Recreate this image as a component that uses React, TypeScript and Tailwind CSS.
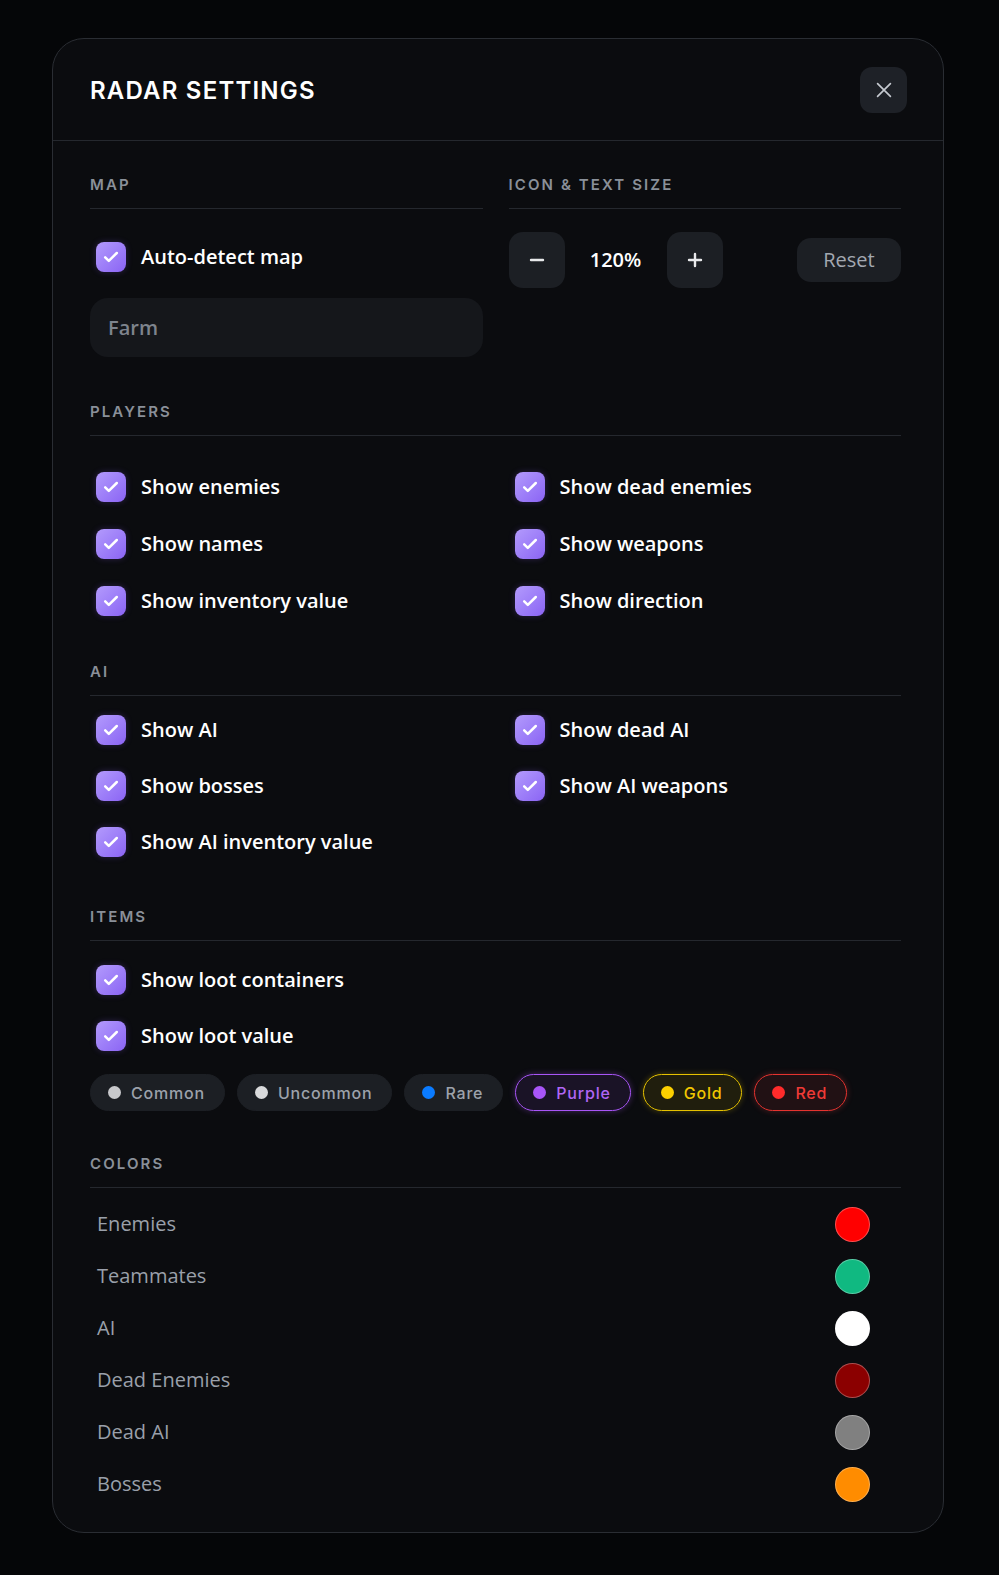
import React from "react";

const body = { fontFamily: '"Open Sans", "Noto Sans", sans-serif' };
const display = { fontFamily: 'Inter, "Noto Sans", sans-serif' };

function Check() {
  return (
    <span className="flex h-[30px] w-[30px] shrink-0 items-center justify-center rounded-[8px] bg-gradient-to-br from-[#b39afc] to-[#8b63f4] shadow-[0_0_6px_rgba(139,92,246,0.25)]">
      <svg width="18" height="18" viewBox="0 0 18 18" fill="none">
        <path d="M3.2 9.4l3.6 3.5L14.8 5" stroke="#fff" strokeWidth="2.5" strokeLinecap="round" strokeLinejoin="round" />
      </svg>
    </span>
  );
}

function CheckRow({ label, h = "h-[57px]" }: { label: string; h?: string }) {
  return (
    <div className={`flex ${h} items-center gap-[15px] pl-[6px]`}>
      <Check />
      <span className="text-[20px] font-semibold text-white" style={body}>
        {label}
      </span>
    </div>
  );
}

function SectionLabel({ children }: { children: React.ReactNode }) {
  return (
    <div
      className="border-b border-[#25282e] pb-[13px] text-[15px] leading-[20px] font-semibold tracking-[0.14em] text-[#8a9099]"
      style={display}
    >
      {children}
    </div>
  );
}

type Chip = { name: string; dot: string; cls: string };

const chips: Chip[] = [
  { name: "Common", dot: "bg-[#c8c9cc]", cls: "bg-[#1c1f24] border-[#1c1f24] text-[#9ca2ab]" },
  { name: "Uncommon", dot: "bg-[#d9dadc]", cls: "bg-[#1c1f24] border-[#1c1f24] text-[#9ca2ab]" },
  { name: "Rare", dot: "bg-[#0a7bff]", cls: "bg-[#1c1f24] border-[#1c1f24] text-[#9ca2ab]" },
  { name: "Purple", dot: "bg-[#a855f7]", cls: "bg-[#a855f7]/10 border-[#a855f7] text-[#b066f5] shadow-[0_0_6px_rgba(168,85,247,0.35)]" },
  { name: "Gold", dot: "bg-[#fcd000]", cls: "bg-[#e6c200]/10 border-[#e6c200] text-[#f2c700] shadow-[0_0_6px_rgba(230,194,0,0.3)]" },
  { name: "Red", dot: "bg-[#ff2b2b]", cls: "bg-[#ef4444]/10 border-[#e5332f] text-[#f03a36] shadow-[0_0_6px_rgba(239,68,68,0.3)]" },
];

const swatches = [
  { name: "Enemies", color: "bg-[#ff0000]" },
  { name: "Teammates", color: "bg-[#10b981]" },
  { name: "AI", color: "bg-[#ffffff]" },
  { name: "Dead Enemies", color: "bg-[#8b0000]" },
  { name: "Dead AI", color: "bg-[#808080]" },
  { name: "Bosses", color: "bg-[#ff8c00]" },
];

export default function App() {
  return (
    <div className="min-h-screen bg-[#050608] pt-[38px] pb-[43px]">
      <div className="ml-[52px] w-[892px] rounded-[32px] border border-[#2a2d33] bg-[#0b0c0f]">
        {/* header */}
        <div className="flex h-[102px] items-center justify-between border-b border-[#25282e] pl-[37px] pr-[36px]">
          <h1 className="pt-[3px] text-[24px] font-semibold tracking-[0.05em] text-white" style={display}>
            RADAR SETTINGS
          </h1>
          <button className="flex h-[46px] w-[47px] items-center justify-center rounded-[12px] bg-[#1e2127]">
            <svg width="22" height="22" viewBox="0 0 24 24" fill="none">
              <path d="M5 5l14 14M19 5L5 19" stroke="#c6cad1" strokeWidth="1.8" strokeLinecap="round" />
            </svg>
          </button>
        </div>

        <div className="pl-[37px] pr-[42px] pt-[34px] pb-[22px]">
          {/* map + size */}
          <div className="grid grid-cols-2 gap-x-[26px]">
            <div>
              <SectionLabel>MAP</SectionLabel>
              <div className="mt-[26px]">
                <CheckRow label="Auto-detect map" h="h-[44px]" />
              </div>
              <div
                className="mt-[19px] flex h-[59px] items-center rounded-[18px] bg-[#15171b] pl-[18px] text-[20px] font-semibold text-[#7e848d]"
                style={body}
              >
                Farm
              </div>
            </div>
            <div>
              <SectionLabel>ICON &amp; TEXT SIZE</SectionLabel>
              <div className="mt-[23px] flex items-center justify-between">
                <div className="flex items-center">
                  <button className="flex h-[56px] w-[56px] items-center justify-center rounded-[14px] bg-[#1c1f24]">
                    <svg width="20" height="20" viewBox="0 0 20 20" fill="none">
                      <path d="M4 10h12" stroke="#e8e9eb" strokeWidth="2.4" strokeLinecap="round" />
                    </svg>
                  </button>
                  <span className="w-[102px] text-center text-[20px] font-semibold text-white" style={body}>
                    120%
                  </span>
                  <button className="flex h-[56px] w-[56px] items-center justify-center rounded-[14px] bg-[#1c1f24]">
                    <svg width="20" height="20" viewBox="0 0 20 20" fill="none">
                      <path d="M4 10h12M10 4v12" stroke="#e8e9eb" strokeWidth="2.4" strokeLinecap="round" />
                    </svg>
                  </button>
                </div>
                <button
                  className="flex h-[44px] w-[104px] items-center justify-center rounded-[14px] bg-[#1c1f24] text-[20px] text-[#a3a8b1]"
                  style={body}
                >
                  Reset
                </button>
              </div>
            </div>
          </div>

          {/* players */}
          <div className="mt-[45px]">
            <SectionLabel>PLAYERS</SectionLabel>
            <div className="mt-[22px] grid grid-cols-2 gap-x-[26px]">
              <CheckRow label="Show enemies" />
              <CheckRow label="Show dead enemies" />
              <CheckRow label="Show names" />
              <CheckRow label="Show weapons" />
              <CheckRow label="Show inventory value" />
              <CheckRow label="Show direction" />
            </div>
          </div>

          {/* ai */}
          <div className="mt-[33px]">
            <SectionLabel>AI</SectionLabel>
            <div className="mt-[6px] grid grid-cols-2 gap-x-[26px]">
              <CheckRow label="Show AI" h="h-[56px]" />
              <CheckRow label="Show dead AI" h="h-[56px]" />
              <CheckRow label="Show bosses" h="h-[56px]" />
              <CheckRow label="Show AI weapons" h="h-[56px]" />
              <CheckRow label="Show AI inventory value" h="h-[56px]" />
            </div>
          </div>

          {/* items */}
          <div className="mt-[37px]">
            <SectionLabel>ITEMS</SectionLabel>
            <div className="mt-[11px]">
              <CheckRow label="Show loot containers" h="h-[56px]" />
              <CheckRow label="Show loot value" h="h-[56px]" />
            </div>
            <div className="mt-[10px] flex gap-[12px]">
              {chips.map((c) => (
                <div
                  key={c.name}
                  className={`flex h-[37px] items-center gap-[10px] rounded-full border pl-[17px] pr-[19px] text-[16px] font-medium tracking-[0.05em] ${c.cls}`}
                  style={display}
                >
                  <span className={`h-[13px] w-[13px] rounded-full ${c.dot}`} />
                  {c.name}
                </div>
              ))}
            </div>
          </div>

          {/* colors */}
          <div className="mt-[43px]">
            <SectionLabel>COLORS</SectionLabel>
            <div className="mt-[10px]">
              {swatches.map((s) => (
                <div key={s.name} className="flex h-[52px] items-center justify-between pl-[7px] pr-[31px]">
                  <span className="text-[20px] text-[#9aa0aa]" style={body}>
                    {s.name}
                  </span>
                  <span className={`h-[35px] w-[35px] rounded-full border border-white/30 ${s.color}`} />
                </div>
              ))}
            </div>
          </div>
        </div>
      </div>
    </div>
  );
}
